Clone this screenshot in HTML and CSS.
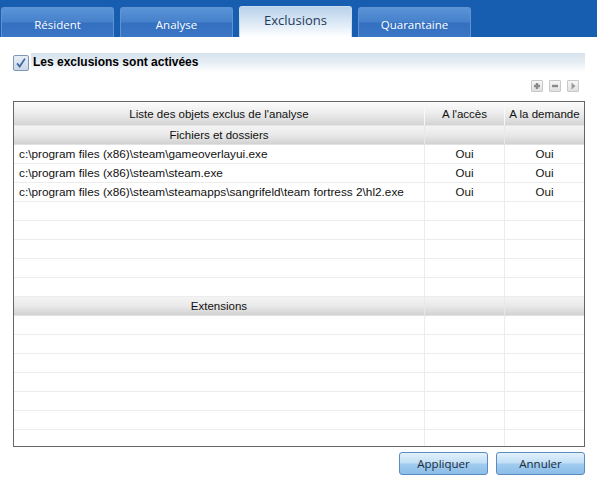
FILE: index.html
```html
<!DOCTYPE html>
<html lang="fr">
<head>
<meta charset="utf-8">
<title>Exclusions</title>
<link rel="stylesheet" href="styles.css">
</head>
<body>
<div class="tabbar">
  <div class="tab">Résident</div>
  <div class="tab">Analyse</div>
  <div class="tab active">Exclusions</div>
  <div class="tab">Quarantaine</div>
</div>
<div class="main">
  <div class="enable">
    <span class="check">
      <svg width="16" height="16" viewBox="0 0 16 16"><path d="M3.5 8.5 L6.5 12 L12.5 3" fill="none" stroke="#3a66a6" stroke-width="2"/></svg>
    </span>
    <div class="enable-bar">Les exclusions sont activées</div>
  </div>
  <div class="tools">
    <span class="tool"><svg width="10" height="10" viewBox="0 0 10 10"><path d="M2 5 H8 M5 2 V8" stroke="#8a8a8a" stroke-width="2.4"/></svg></span>
    <span class="tool"><svg width="10" height="10" viewBox="0 0 10 10"><path d="M2 5 H8" stroke="#8a8a8a" stroke-width="2.4"/></svg></span>
    <span class="tool"><svg width="10" height="10" viewBox="0 0 10 10"><path d="M3.5 1.5 L7.5 5 L3.5 8.5 Z" fill="#9a9a9a"/></svg></span>
  </div>
  <div class="list">
    <div class="row head">
      <div class="cell">Liste des objets exclus de l'analyse</div>
      <div class="cell">A l'accès</div>
      <div class="cell">A la demande</div>
    </div>
    <div class="row group">
      <div class="cell">Fichiers et dossiers</div>
      <div class="cell"></div>
      <div class="cell"></div>
    </div>
    <div class="row"><div class="cell path">c:\program files (x86)\steam\gameoverlayui.exe</div><div class="cell">Oui</div><div class="cell">Oui</div></div>
    <div class="row"><div class="cell path">c:\program files (x86)\steam\steam.exe</div><div class="cell">Oui</div><div class="cell">Oui</div></div>
    <div class="row"><div class="cell path">c:\program files (x86)\steam\steamapps\sangrifeld\team fortress 2\hl2.exe</div><div class="cell">Oui</div><div class="cell">Oui</div></div>
    <div class="row"><div class="cell"></div><div class="cell"></div><div class="cell"></div></div>
    <div class="row"><div class="cell"></div><div class="cell"></div><div class="cell"></div></div>
    <div class="row"><div class="cell"></div><div class="cell"></div><div class="cell"></div></div>
    <div class="row"><div class="cell"></div><div class="cell"></div><div class="cell"></div></div>
    <div class="row"><div class="cell"></div><div class="cell"></div><div class="cell"></div></div>
    <div class="row group">
      <div class="cell">Extensions</div>
      <div class="cell"></div>
      <div class="cell"></div>
    </div>
    <div class="row"><div class="cell"></div><div class="cell"></div><div class="cell"></div></div>
    <div class="row"><div class="cell"></div><div class="cell"></div><div class="cell"></div></div>
    <div class="row"><div class="cell"></div><div class="cell"></div><div class="cell"></div></div>
    <div class="row"><div class="cell"></div><div class="cell"></div><div class="cell"></div></div>
    <div class="row"><div class="cell"></div><div class="cell"></div><div class="cell"></div></div>
    <div class="row"><div class="cell"></div><div class="cell"></div><div class="cell"></div></div>
    <div class="row"><div class="cell"></div><div class="cell"></div><div class="cell"></div></div>
  </div>
  <div class="actions">
    <button class="btn">Appliquer</button>
    <button class="btn">Annuler</button>
  </div>
</div>
</body>
</html>
```
FILE: styles.css
```css
html, body {
  margin: 0;
  padding: 0;
  background: #ffffff;
  font-family: "Liberation Sans", Arial, sans-serif;
  font-size: 12px;
  color: #1a1a1a;
}

.tabbar {
  height: 37px;
  box-sizing: border-box;
  background: #175db0;
  display: flex;
  align-items: flex-end;
  gap: 6px;
  padding-left: 1px;
}

.tab {
  width: 113px;
  height: 30px;
  box-sizing: border-box;
  border: 1px solid #5f93d2;
  border-bottom: none;
  border-radius: 3px 3px 0 0;
  background: linear-gradient(#5a93d6 0%, #4581cb 48%, #3470bf 52%, #3a77c5 100%);
  color: #ffffff;
  font-family: "Open Sans", "Liberation Sans", sans-serif;
  font-size: 11.5px;
  display: flex;
  align-items: center;
  justify-content: center;
  padding-top: 3px;
}

.tab.active {
  height: 31px;
  border-color: #c9dcef;
  background: linear-gradient(#b9d1ea 0%, #d3e3f3 40%, #ffffff 100%);
  color: #1f3a5c;
  font-size: 13px;
  padding-top: 0;
  padding-bottom: 4px;
}

.main {
  padding: 16px 12px 0 13px;
}

.enable {
  display: flex;
  align-items: center;
  gap: 2px;
  height: 19px;
}

.check {
  width: 16px;
  height: 16px;
  box-sizing: border-box;
  border: 1px solid #7d98b8;
  border-radius: 2px;
  background: linear-gradient(#e8eef6, #cbd7e6);
  display: flex;
  align-items: center;
  justify-content: center;
}

.check svg {
  width: 14px;
  height: 14px;
}

.enable-bar {
  flex: 1;
  height: 19px;
  line-height: 19px;
  padding-left: 2px;
  font-weight: bold;
  font-size: 12px;
  color: #000000;
  background: linear-gradient(#d6e2ed 0%, #e4ecf3 45%, #ffffff 100%);
}

.tools {
  display: flex;
  justify-content: flex-end;
  gap: 6px;
  margin-top: 8px;
  padding-right: 6px;
  height: 12px;
}

.tool {
  width: 12px;
  height: 12px;
  box-sizing: border-box;
  border: 1px solid #c8c8c8;
  border-radius: 1px;
  background: linear-gradient(#f7f7f7, #e0e0e0);
  display: flex;
  align-items: center;
  justify-content: center;
}

.tool svg {
  width: 10px;
  height: 10px;
}

.list {
  margin-top: 9px;
  width: 572px;
  height: 346px;
  box-sizing: border-box;
  border: 1px solid #666666;
  overflow: hidden;
  background: #ffffff;
}

.row {
  display: grid;
  grid-template-columns: 411px 80px 1fr;
  height: 19px;
  box-sizing: border-box;
  border-bottom: 1px solid #ececec;
}

.cell {
  border-right: 1px solid #ececec;
  text-align: center;
  line-height: 18px;
  white-space: nowrap;
  overflow: hidden;
  font-size: 11.5px;
  color: #111111;
}

.cell:last-child {
  border-right: none;
}

.cell.path {
  text-align: left;
  padding-left: 5px;
  font-size: 11.8px;
}

.row.head {
  height: 24px;
  border-bottom: 1px solid #e6e6e6;
  background: linear-gradient(#fbfbfb 0%, #eeeeee 45%, #d4d4d4 100%);
}

.row.head .cell {
  line-height: 24px;
  border-right-color: #f8f8f8;
}

.row.group {
  background: linear-gradient(#f4f4f4 0%, #e9e9e9 50%, #d2d2d2 100%);
  border-bottom: 1px solid #e2e2e2;
}

.row.group .cell {
  border-right-color: #e8e8e8;
}

.actions {
  display: flex;
  justify-content: flex-end;
  gap: 8px;
  margin-top: 5px;
  padding-right: 0;
}

.btn {
  width: 89px;
  height: 23px;
  border: 1px solid #5c8cbf;
  border-radius: 3px;
  background: linear-gradient(#e3f1fb 0%, #c3e0f6 45%, #9fcbef 55%, #8cbde8 100%);
  font-family: "Open Sans", "Liberation Sans", sans-serif;
  font-size: 11.5px;
  color: #1b2a3c;
  padding: 0;
}
```
